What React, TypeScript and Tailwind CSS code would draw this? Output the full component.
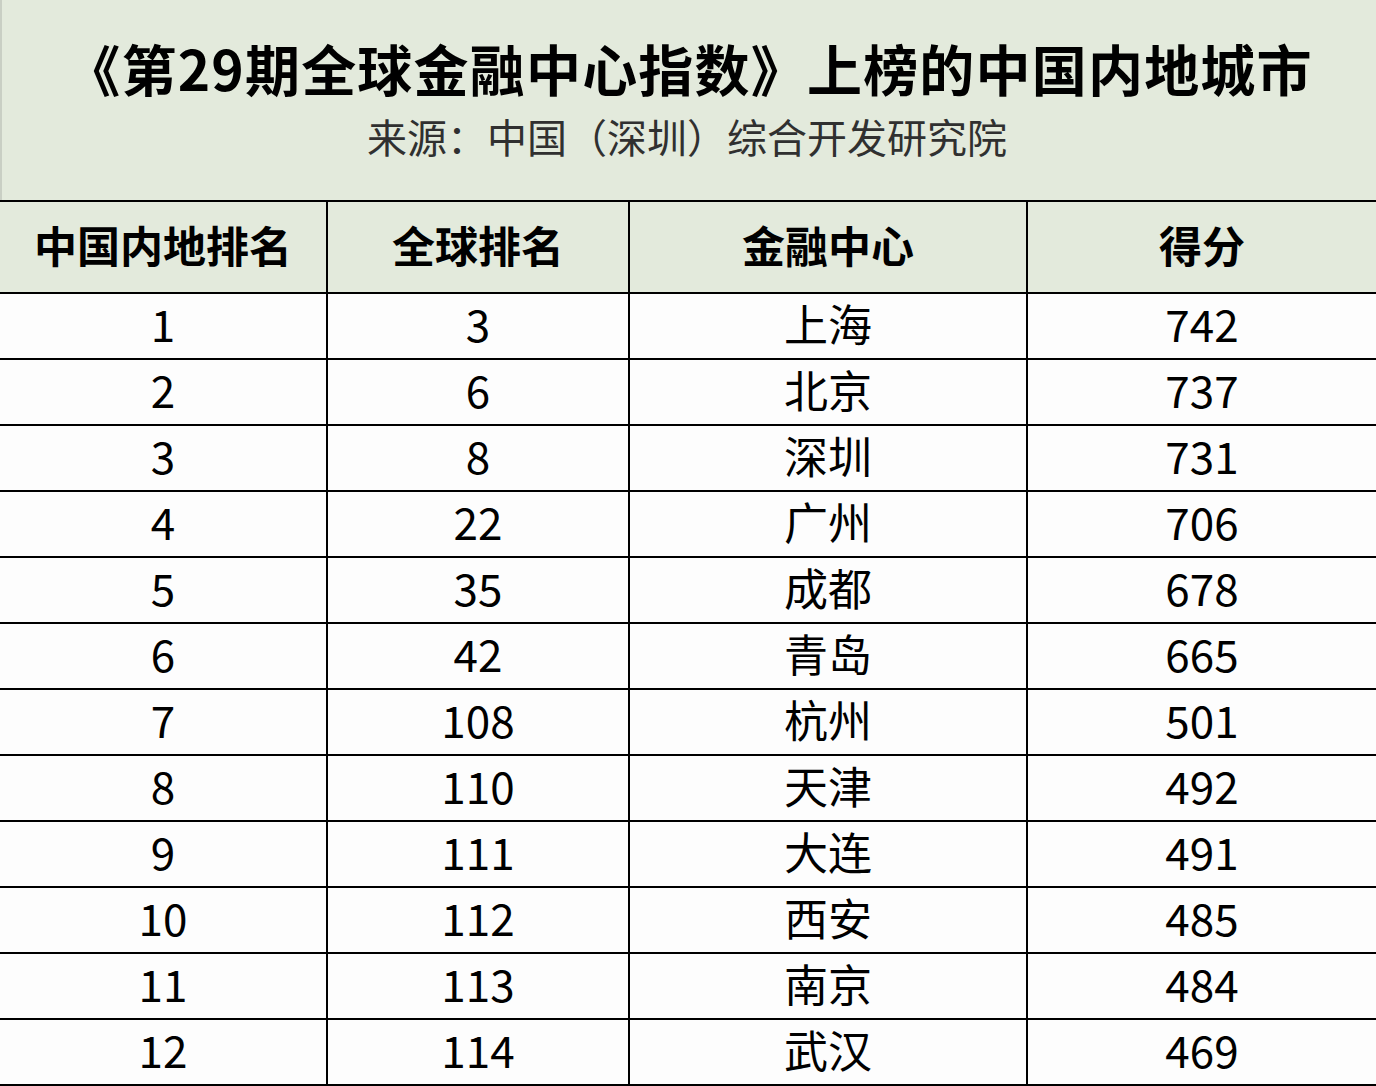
const rows: [number, number, string, number][] = [
  [1, 3, '上海', 742],
  [2, 6, '北京', 737],
  [3, 8, '深圳', 731],
  [4, 22, '广州', 706],
  [5, 35, '成都', 678],
  [6, 42, '青岛', 665],
  [7, 108, '杭州', 501],
  [8, 110, '天津', 492],
  [9, 111, '大连', 491],
  [10, 112, '西安', 485],
  [11, 113, '南京', 484],
  [12, 114, '武汉', 469],
];

const headers = ['中国内地排名', '全球排名', '金融中心', '得分'];

const cell = 'flex items-center justify-center border-b-2 border-black';

export default function App() {
  return (
    <div
      className="w-[1376px] h-[1086px] overflow-hidden bg-[#fdfdfd] text-black"
      style={{ fontFamily: '"Noto Sans CJK SC", "Noto Sans", sans-serif' }}
    >
      <div className="h-[200px] bg-[#e3eadc] flex flex-col items-center border-l-2 border-[#c9cfc4]">
        <h1 className="mt-[35px] text-[55px] leading-[64px] font-bold tracking-[1.2px]">
          《第29期全球金融中心指数》上榜的中国内地城市
        </h1>
        <p className="mt-[12px] text-[40px] leading-[50px] text-[#303030] font-normal pr-[4px]">
          来源：中国（深圳）综合开发研究院
        </p>
      </div>

      <div className="grid grid-cols-[328px_302px_398px_1fr] border-t-2 border-black">
        {headers.map((h, i) => (
          <div
            key={h}
            className={`${cell} h-[92px] pb-[6px] bg-[#e3eadc] text-[43px] leading-none font-bold ${i < 3 ? 'border-r-2' : ''}`}
          >
            {h}
          </div>
        ))}
        {rows.map((r) =>
          r.map((v, i) => (
            <div
              key={`${r[0]}-${i}`}
              className={`${cell} h-[66px] pb-[6px] text-[44px] leading-none ${i < 3 ? 'border-r-2' : ''}`}
            >
              {v}
            </div>
          ))
        )}
      </div>
    </div>
  );
}
